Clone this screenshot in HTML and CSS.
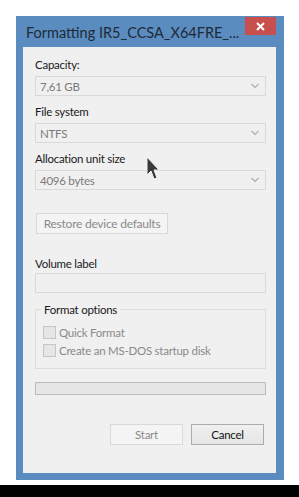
FILE: index.html
```html
<!DOCTYPE html>
<html lang="en">
<head>
  <meta charset="UTF-8" />
  <title>Format</title>
  <link rel="stylesheet" href="styles.css">
</head>
<body>

  <div class="window">
    <div class="titlebar">
      <span class="title">Formatting IR5_CCSA_X64FRE_...</span>
      <div class="close-btn">
        <svg width="9" height="9" viewBox="0 0 9 9"><path d="M1 1 L8 8 M8 1 L1 8" stroke="#fff" stroke-width="2"/></svg>
      </div>
    </div>

    <div class="content">
      <div class="label first">Capacity:</div>
      <div class="combo">
        <span>7,61 GB</span>
        <svg class="chev" width="8" height="6" viewBox="0 0 8 6"><path d="M0.5 1 L4 4.5 L7.5 1" fill="none" stroke="#b5b5b5" stroke-width="1.5"/></svg>
      </div>

      <div class="label">File system</div>
      <div class="combo">
        <span>NTFS</span>
        <svg class="chev" width="8" height="6" viewBox="0 0 8 6"><path d="M0.5 1 L4 4.5 L7.5 1" fill="none" stroke="#b5b5b5" stroke-width="1.5"/></svg>
      </div>

      <div class="label">Allocation unit size</div>
      <div class="combo">
        <span>4096 bytes</span>
        <svg class="chev" width="8" height="6" viewBox="0 0 8 6"><path d="M0.5 1 L4 4.5 L7.5 1" fill="none" stroke="#b5b5b5" stroke-width="1.5"/></svg>
      </div>

      <div class="btn restore disabled">Restore device defaults</div>

      <div class="label vol">Volume label</div>
      <div class="textbox"></div>

      <div class="group">
        <div class="legend">Format options</div>
        <div class="check"><span class="box"></span>Quick Format</div>
        <div class="check"><span class="box"></span>Create an MS-DOS startup disk</div>
      </div>

      <div class="progress"></div>

      <div class="actions">
        <div class="btn disabled">Start</div>
        <div class="btn">Cancel</div>
      </div>
    </div>

    <svg class="cursor" width="14" height="26" viewBox="0 0 14 26">
      <path d="M1 1 L1 19 L5 15 L8 23 L11 22 L8 14 L13 14 Z" fill="#3a3a3a" stroke="#f4f4f4" stroke-width="1"/>
    </svg>
  </div>

  <div class="taskbar"></div>

</body>
</html>
```

FILE: styles.css
```css
body {
  margin: 0;
  background: #ffffff;
  font-family: Lato, "Noto Sans", sans-serif;
  font-size: 11.5px;
  letter-spacing: -0.25px;
  width: 299px;
  height: 497px;
  position: relative;
  overflow: hidden;
}

.window {
  position: relative;
  margin: 16px 0 0 16px;
  width: 268px;
  box-sizing: border-box;
  background: #5b8cc0;
  padding: 0 8px 7px 7px;
}

.titlebar {
  height: 31px;
  display: flex;
  align-items: flex-start;
}

.title {
  margin: 7px 0 0 3px;
  font-size: 14.5px;
  letter-spacing: 0;
  line-height: 20px;
  color: #1e2a36;
  white-space: nowrap;
}

.close-btn {
  margin: 1px 0 0 auto;
  width: 31px;
  height: 18px;
  background: #c7504f;
  display: flex;
  align-items: center;
  justify-content: center;
}

.content {
  background: #f0f0f0;
  height: 426px;
  padding: 0 10px 0 12px;
  display: flex;
  flex-direction: column;
}

.label {
  line-height: 15px;
  color: #1a1a1a;
  margin-top: 8px;
  margin-bottom: 4px;
}

.label.first {
  margin-top: 10px;
}

.combo {
  height: 20px;
  box-sizing: border-box;
  border: 1px solid #d9d9d9;
  background: #f0f0f0;
  color: #7a7a7a;
  display: flex;
  align-items: center;
  padding: 0 6px 0 4px;
}

.combo span {
  flex: 1;
}

.btn {
  height: 21px;
  box-sizing: border-box;
  border: 1px solid #acacac;
  background: linear-gradient(#f0f0f0, #e5e5e5);
  color: #111;
  display: flex;
  align-items: center;
  justify-content: center;
  width: 73px;
  white-space: nowrap;
}

.btn.disabled {
  border-color: #d9d9d9;
  background: #f4f4f4;
  color: #8a8a8a;
}

.restore {
  margin-top: 23px;
  margin-left: 1px;
  width: 132px;
  font-size: 12px;
  border-color: #d3d3d3;
}

.label.vol {
  margin-top: 22px;
  margin-bottom: 2px;
}

.textbox {
  height: 20px;
  box-sizing: border-box;
  border: 1px solid #dadada;
  background: #f0f0f0;
}

.group {
  margin-top: 16px;
  height: 60px;
  box-sizing: border-box;
  border: 1px solid #dcdcdc;
  position: relative;
  padding: 16px 0 0 7px;
}

.legend {
  position: absolute;
  top: -8px;
  left: 5px;
  padding: 0 3px;
  background: #f0f0f0;
  line-height: 15px;
  color: #1a1a1a;
}

.check {
  display: flex;
  align-items: center;
  height: 13px;
  margin-bottom: 5px;
  color: #8a8a8a;
}

.box {
  width: 13px;
  height: 13px;
  box-sizing: border-box;
  border: 1px solid #c6c6c6;
  background: #e6e6e6;
  margin-right: 3px;
}

.progress {
  margin-top: 13px;
  height: 13px;
  box-sizing: border-box;
  border: 1px solid #bcbcbc;
  background: #e6e6e6;
}

.actions {
  margin-top: 29px;
  display: flex;
  justify-content: flex-end;
  gap: 8px;
  padding-right: 2px;
}

.cursor {
  position: absolute;
  left: 130px;
  top: 140px;
}

.taskbar {
  position: absolute;
  left: 0;
  right: 0;
  top: 485px;
  height: 12px;
  background: #000;
}
```
